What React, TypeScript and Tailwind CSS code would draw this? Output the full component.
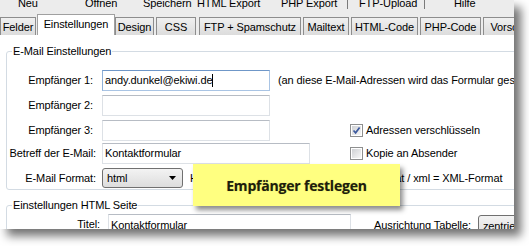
const toolbar: { label: string; w: number; pl: number; sep?: boolean }[] = [
  { label: "Neu", w: 85, pl: 18 },
  { label: "Öffnen", w: 58, pl: 0 },
  { label: "Speichern", w: 54, pl: 0 },
  { label: "HTML Export", w: 84, pl: 0 },
  { label: "PHP Export", w: 66, pl: 0 },
  { label: "", w: 12, pl: 0, sep: true },
  { label: "FTP-Upload", w: 65, pl: 0 },
  { label: "", w: 30, pl: 0, sep: true },
  { label: "Hilfe", w: 60, pl: 0 },
];

const tabs: { label: string; w: string; ml: string; active?: boolean }[] = [
  { label: "Felder", w: "w-[36px]", ml: "ml-0" },
  { label: "Einstellungen", w: "w-[78px]", ml: "ml-[1px]", active: true },
  { label: "Design", w: "w-[39px]", ml: "ml-0" },
  { label: "CSS", w: "w-[40px]", ml: "ml-[2px]" },
  { label: "FTP + Spamschutz", w: "w-[102px]", ml: "ml-[3px]" },
  { label: "Mailtext", w: "w-[46px]", ml: "ml-[2px]" },
  { label: "HTML-Code", w: "w-[67px]", ml: "ml-[2px]" },
  { label: "PHP-Code", w: "w-[61px]", ml: "ml-[2px]" },
  { label: "Vorschau", w: "w-[60px]", ml: "ml-[2px]" },
];

function TextBox({
  value,
  width,
  focused,
}: {
  value?: string;
  width: string;
  focused?: boolean;
}) {
  return (
    <div
      className={`${width} h-[21px] shrink-0 flex items-center pl-[2px] border bg-white ${
        focused
          ? "border-[#a9c4e4] border-t-[#6f97c8] border-l-[#8fb0d8]"
          : "border-[#dde1e6] border-t-[#b7bcc4]"
      }`}
    >
      <span className="whitespace-nowrap">{value}</span>
      {focused && <span className="w-px h-[13px] bg-black" />}
    </div>
  );
}

function CheckBox({ checked, label }: { checked?: boolean; label: string }) {
  return (
    <div className="flex items-center">
      <div className="w-[13px] h-[13px] border border-[#8e8f8f] bg-white p-[1px] shrink-0">
        <div className="w-full h-full bg-gradient-to-br from-[#cfd1d4] to-[#f7f7f7] relative">
          {checked && (
            <svg viewBox="0 0 9 9" className="absolute inset-0 w-full h-full">
              <path
                d="M1.5 4.5 L3.6 6.8 L7.6 1.4"
                fill="none"
                stroke="#3d5a9e"
                strokeWidth="1.7"
              />
            </svg>
          )}
        </div>
      </div>
      <span className="ml-[3px] whitespace-nowrap">{label}</span>
    </div>
  );
}

function Label({ text, pr }: { text: string; pr: string }) {
  return (
    <div className={`w-[89px] shrink-0 text-right whitespace-nowrap ${pr}`}>
      {text}
    </div>
  );
}

export default function App() {
  return (
    <div className="w-[529px] h-[246px] bg-white">
      <div className="relative w-[514px] h-[229px] overflow-hidden bg-[#ececec] shadow-[7px_7px_9px_rgba(0,0,0,0.55)] font-['Liberation_Sans',Arial,sans-serif] text-[11px] tracking-[-0.1px] leading-[15px] text-black flex flex-col">
        {/* toolbar, only its bottom edge is visible */}
        <div className="h-[14px] shrink-0 overflow-hidden">
          <div className="flex -mt-[4px]">
            {toolbar.map((t, i) =>
              t.sep ? (
                <div key={i} className="shrink-0 h-[13px]" style={{ width: t.w }}>
                  <div className="w-px h-full bg-[#7a7a7a]" />
                </div>
              ) : (
                <div
                  key={i}
                  className="shrink-0 whitespace-nowrap"
                  style={{ width: t.w, paddingLeft: t.pl }}
                >
                  {t.label}
                </div>
              )
            )}
          </div>
        </div>

        {/* tabs */}
        <div className="h-[21px] shrink-0 flex items-end">
          {tabs.map((t) => (
            <div
              key={t.label}
              className={`${t.w} ${t.ml} shrink-0 overflow-hidden whitespace-nowrap text-center border border-b-0 pt-[2px] ${
                t.active
                  ? "h-[21px] bg-white border-[#a0a0a0]"
                  : "h-[18px] bg-gradient-to-b from-[#f0f0f0] to-[#dcdcdc] border-[#8d8d8d]"
              }`}
            >
              {t.label}
            </div>
          ))}
        </div>

        {/* page */}
        <div className="flex-1 bg-white pt-[9px]">
          <fieldset className="ml-[6px] w-[600px] border border-[#d3dbe3] rounded-[3px] p-0 pb-[1px]">
            <legend className="ml-[5px] px-[1px]">E-Mail Einstellungen</legend>
            <div className="pt-[11px] flex flex-col">
              <div className="flex items-center">
                <Label text="Empfänger 1:" pr="pr-[3px]" />
                <div className="ml-[6px]">
                  <TextBox value="andy.dunkel@ekiwi.de" width="w-[168px]" focused />
                </div>
                <span className="ml-[8px] whitespace-nowrap">
                  (an diese E-Mail-Adressen wird das Formular geschickt)
                </span>
              </div>
              <div className="flex items-center mt-[4px]">
                <Label text="Empfänger 2:" pr="pr-[3px]" />
                <div className="ml-[6px]">
                  <TextBox width="w-[168px]" />
                </div>
              </div>
              <div className="flex items-center mt-[4px]">
                <Label text="Empfänger 3:" pr="pr-[3px]" />
                <div className="ml-[6px]">
                  <TextBox width="w-[168px]" />
                </div>
                <div className="ml-[80px]">
                  <CheckBox checked label="Adressen verschlüsseln" />
                </div>
              </div>
              <div className="flex items-center mt-[2px]">
                <Label text="Betreff der E-Mail:" pr="pr-0" />
                <div className="ml-[6px]">
                  <TextBox value="Kontaktformular" width="w-[208px]" />
                </div>
                <div className="ml-[40px]">
                  <CheckBox label="Kopie an Absender" />
                </div>
              </div>
              <div className="flex items-center mt-[4px]">
                <Label text="E-Mail Format:" pr="pr-0" />
                <div className="ml-[6px] w-[81px] h-[20px] shrink-0 rounded-[3px] border border-[#707070] bg-gradient-to-b from-[#f3f3f3] to-[#dddddd] flex items-center justify-between pl-[4px] pr-[6px]">
                  <span>html</span>
                  <svg width="7" height="4" viewBox="0 0 7 4">
                    <path d="M0 0 H7 L3.5 4 Z" fill="#000" />
                  </svg>
                </div>
                <span className="ml-[7px] whitespace-nowrap">
                  HTML = HTML-Format / plain = Plain-Format / xml = XML-Format
                </span>
              </div>
            </div>
          </fieldset>

          <fieldset className="mt-[8px] ml-[6px] w-[600px] border border-[#d3dbe3] rounded-[3px] p-0">
            <legend className="ml-[5px] px-[1px]">Einstellungen HTML Seite</legend>
            <div className="pt-[1px] flex items-start">
              <div className="w-[93px] shrink-0 text-right pt-[3px]">Titel:</div>
              <div className="ml-[8px] w-[243px] h-[22px] shrink-0 border border-[#dde1e6] border-t-[#b7bcc4] pl-[2px] pt-[3px] whitespace-nowrap">
                Kontaktformular
              </div>
              <div className="ml-[23px] pt-[4px] whitespace-nowrap">Ausrichtung Tabelle:</div>
              <div className="ml-[7px] mt-[1px] w-[70px] h-[22px] shrink-0 rounded-[3px] border border-[#707070] bg-gradient-to-b from-[#f3f3f3] to-[#dddddd] pl-[4px] pt-[3px]">
                zentriert
              </div>
            </div>
          </fieldset>
        </div>

        {/* tooltip */}
        <div className="absolute left-[193px] top-[164px] w-[207px] h-[42px] bg-[#ffff80] shadow-[3px_4px_5px_rgba(0,0,0,0.45)] flex items-center justify-center">
          <span className="font-['Open_Sans',sans-serif] font-bold text-[14px] text-[#1d1d10] tracking-[-0.2px] [text-shadow:0_0_1px_rgba(140,140,0,0.6)]">
            Empfänger festlegen
          </span>
        </div>
      </div>
    </div>
  );
}
